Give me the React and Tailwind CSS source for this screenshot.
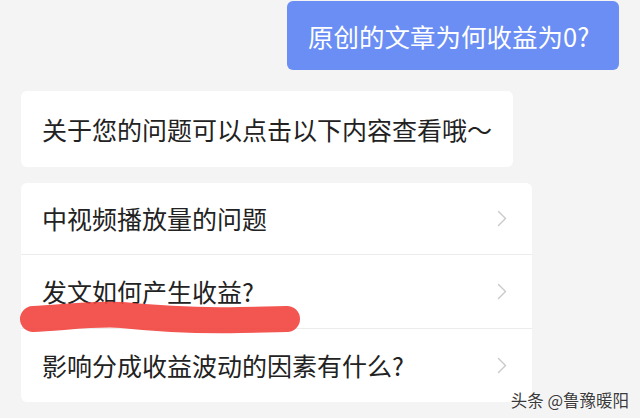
import React from "react";

const font = { fontFamily: '"Noto Sans CJK SC", "Noto Sans", sans-serif' };

function Chevron() {
  return (
    <svg width="10" height="17" viewBox="0 0 10 17" className="shrink-0">
      <path d="M1.5 1.5 L8.5 8.5 L1.5 15.5" fill="none" stroke="#c9c9c9" strokeWidth="1.4" strokeLinecap="round" strokeLinejoin="round" />
    </svg>
  );
}

function Row({ text, h, border }) {
  return (
    <div className={`flex items-center justify-between pl-[21px] pr-[25px] ${h} ${border ? "border-b border-[#ececec]" : ""}`}>
      <span className="text-[25px] leading-none text-[#222]">{text}</span>
      <Chevron />
    </div>
  );
}

export default function App() {
  return (
    <div className="relative w-[640px] h-[418px] overflow-hidden bg-[#f4f4f4]" style={font}>
      <div className="flex justify-end pr-[21px] pt-[1px]">
        <div className="h-[69px] w-[332px] rounded-[6px] bg-[#6a8ef4] flex items-center pl-[21px]">
          <span className="text-[25.5px] leading-none text-white">原创的文章为何收益为0?</span>
        </div>
      </div>

      <div className="ml-[21px] mt-[21px] w-[492px] h-[76px] rounded-[6px] bg-white flex items-center pl-[21px]">
        <span className="text-[25px] leading-none text-[#222] whitespace-nowrap">关于您的问题可以点击以下内容查看哦～</span>
      </div>

      <div className="ml-[21px] mt-[16px] w-[511px] rounded-[6px] bg-white flex flex-col">
        <Row text="中视频播放量的问题" h="h-[72px]" border />
        <Row text="发文如何产生收益?" h="h-[74px]" border />
        <Row text="影响分成收益波动的因素有什么?" h="h-[73px]" />
      </div>

      <svg className="absolute left-0 top-[290px] pointer-events-none" width="320" height="50" viewBox="0 290 320 50">
        <path
          d="M 33 319 C 60 318, 95 313, 122 315 C 160 319, 195 321, 240 320 L 287 319"
          fill="none"
          stroke="#f2433d"
          strokeOpacity="0.9"
          strokeWidth="26"
          strokeLinecap="round"
          strokeLinejoin="round"
        />
      </svg>

      <div className="absolute right-[11px] bottom-[10px] text-[16.5px] leading-none text-[#3a3a3a] [text-shadow:0_0_2px_#ffffff,0_0_1px_#ffffff]">
        头条 @鲁豫暖阳
      </div>
    </div>
  );
}
